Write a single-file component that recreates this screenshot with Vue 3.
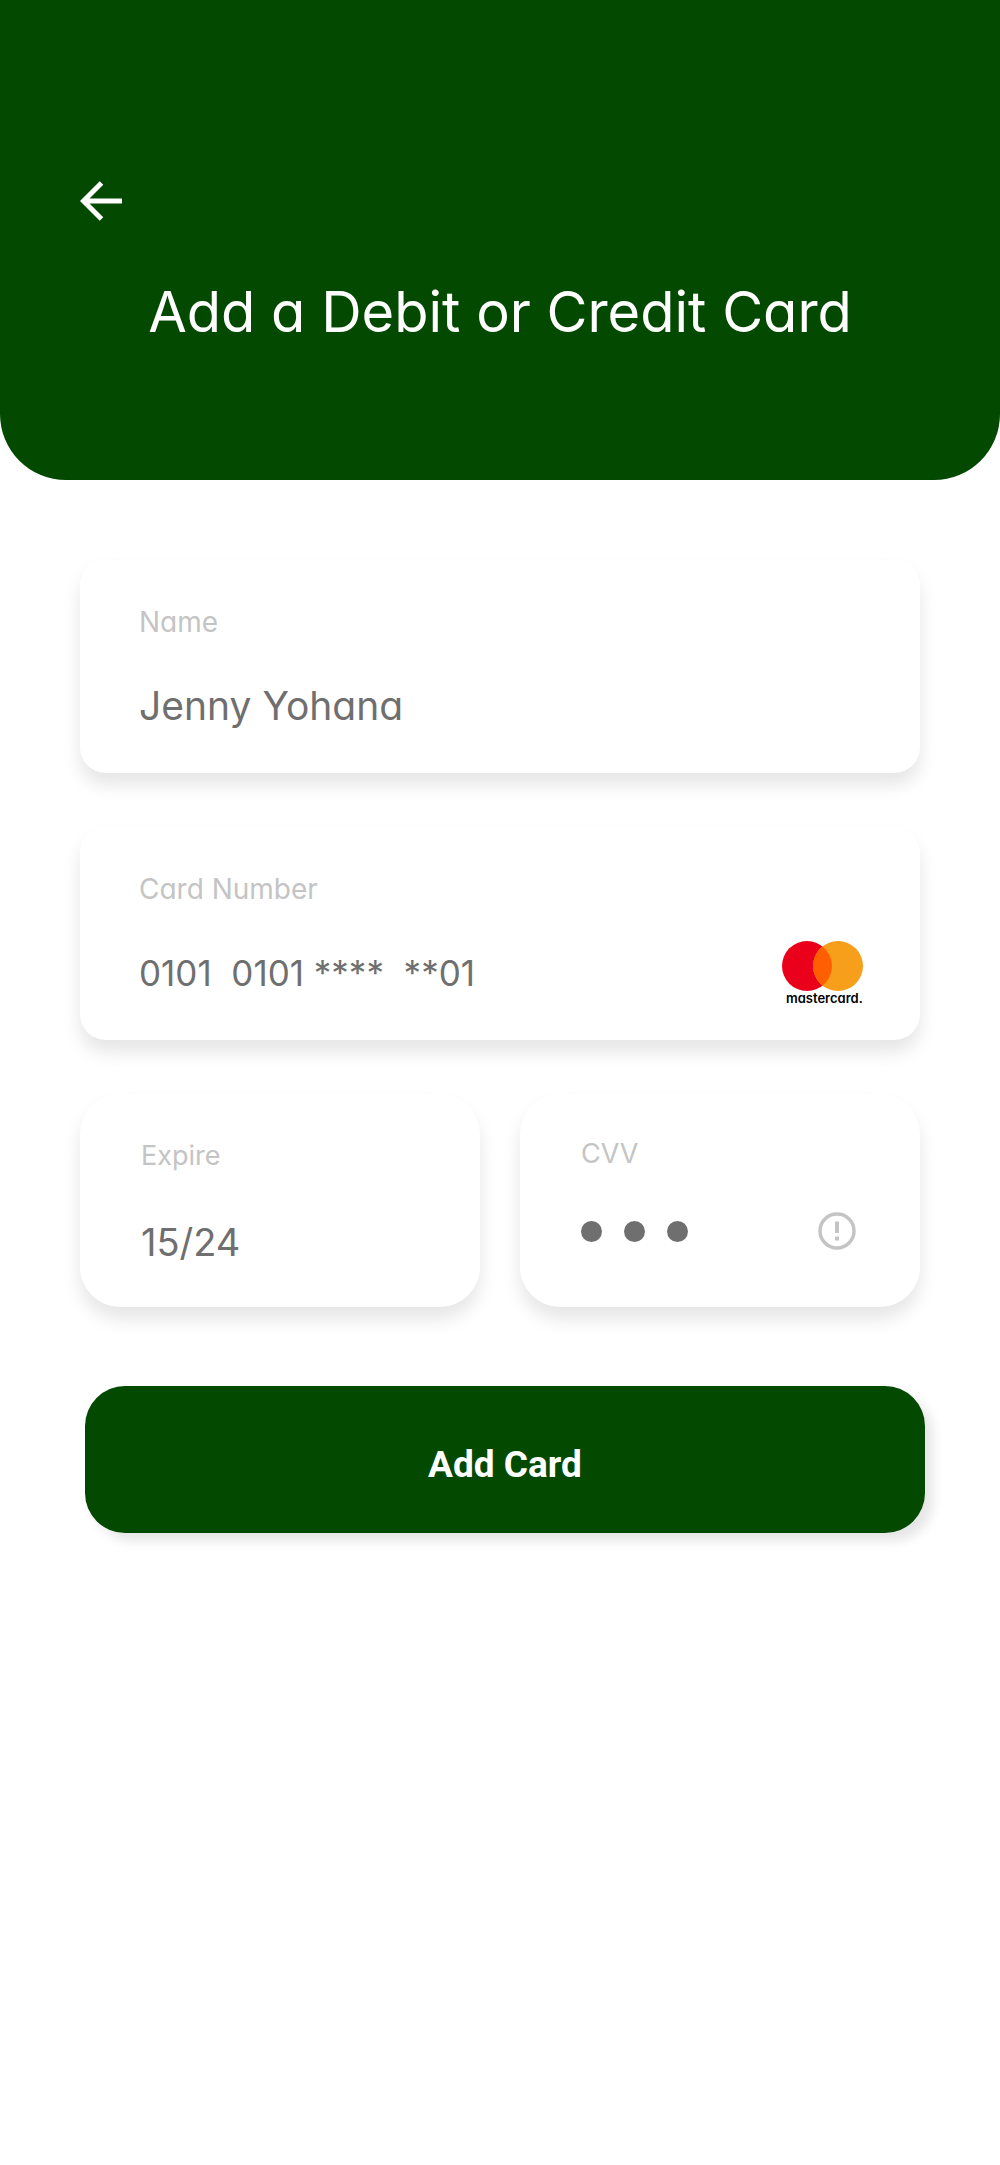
<script setup>
import { ref } from 'vue'

const name = ref('Jenny Yohana')
const number = ref('0101  0101 ****  **01')
const expire = ref('15/24')
const cvv = ref('123')
</script>

<template>
  <main class="page">
    <header class="header">
      <button class="back" type="button" aria-label="Back">
        <svg viewBox="0 0 42 42" width="42" height="42" aria-hidden="true">
          <path d="M42 21H5M21.500 3 3.500 21l18 18" fill="none" stroke="#fff" stroke-width="5" />
        </svg>
      </button>
      <h1 class="title">Add a Debit or Credit Card</h1>
    </header>

    <form class="form" @submit.prevent>
      <div class="card">
        <label class="label" for="name">Name</label>
        <input id="name" v-model="name" class="value" type="text" />
      </div>

      <div class="card">
        <label class="label" for="number">Card Number</label>
        <div class="line">
          <input id="number" v-model="number" class="value digits" type="text" />
          <svg class="brand" viewBox="0 0 82 64" width="82" height="64" role="img" aria-label="mastercard">
            <circle cx="25" cy="25" r="25" fill="#eb001b" />
            <circle cx="56" cy="25" r="25" fill="#f79e1b" />
            <path d="M40.500 5.400a25 25 0 0 1 0 39.200a25 25 0 0 1 0-39.200z" fill="#ff5f00" />
            <text x="4" y="62" class="brand-name">mastercard.</text>
          </svg>
        </div>
      </div>

      <div class="row">
        <div class="card small">
          <label class="label" for="expire">Expire</label>
          <input id="expire" v-model="expire" class="value" type="text" />
        </div>
        <div class="card small cvv">
          <label class="label" for="cvv">CVV</label>
          <div class="line">
            <div class="secret">
              <span v-for="n in cvv.length" :key="n" class="dot"></span>
              <input id="cvv" v-model="cvv" class="secret-input" type="password" maxlength="3" />
            </div>
            <button class="info" type="button" aria-label="About the CVV">
              <svg viewBox="0 0 38 38" width="38" height="38" aria-hidden="true">
                <circle cx="19" cy="19" r="17" fill="none" stroke="#c4c4c4" stroke-width="3.500" />
                <path d="M19 9.500v11.500M19 24.500v4" stroke="#c4c4c4" stroke-width="4" />
              </svg>
            </button>
          </div>
        </div>
      </div>

      <button class="submit" type="submit">Add Card</button>
    </form>
  </main>
</template>

<style>
body {
  margin: 0;
  background: #fff;
}
</style>

<style scoped>
.page {
  min-height: 100vh;
  background: #fff;
  font-family: Inter, 'Open Sans', sans-serif;
  font-feature-settings: 'cv11';
}

.page *,
.page {
  box-sizing: border-box;
}

button,
input {
  margin: 0;
  padding: 0;
  border: 0;
  background: none;
  font: inherit;
  font-feature-settings: inherit;
}

svg {
  display: block;
}

.header {
  display: flex;
  flex-direction: column;
  gap: 58px;
  padding: 180px 80px 136px;
  border-radius: 0 0 66px 66px;
  background: #034900;
}

.back {
  align-self: flex-start;
}

.title {
  margin: 0;
  color: #fff;
  font-size: 56px;
  font-weight: 400;
  line-height: 64px;
  text-align: center;
}

.form {
  display: flex;
  flex-direction: column;
  gap: 54px;
  padding: 80px;
}

.card {
  display: flex;
  flex-direction: column;
  gap: 44px;
  min-width: 0;
  padding: 46px 56px 43px 59px;
  border-radius: 26px;
  background: #fff;
  box-shadow: 0 12px 18px rgba(0, 0, 0, 0.1);
}

.row {
  display: grid;
  grid-template-columns: 1fr 1fr;
  gap: 40px;
}

.small {
  gap: 46px;
  padding: 46px 56px 41px 61px;
  border-radius: 40px;
}

.label {
  color: #c4c4c4;
  font-size: 28px;
  font-weight: 400;
  line-height: 32px;
}

.value {
  width: 100%;
  min-width: 0;
  height: 48px;
  color: #6f6f6f;
  font-size: 39px;
  font-weight: 400;
  line-height: 48px;
}

.digits {
  font-size: 35px;
}

.small .label {
  font-size: 27px;
}

.small .value {
  font-size: 38px;
}

.line {
  display: flex;
  align-items: center;
  justify-content: space-between;
  height: 48px;
}

.brand {
  flex: none;
}

.brand-name {
  font-size: 13px;
  font-weight: 600;
  fill: #000;
}

.cvv {
  gap: 37px;
  padding: 44px 64px 38px 61px;
}

.secret {
  position: relative;
  display: flex;
  gap: 22px;
}

.dot {
  width: 21px;
  height: 21px;
  border-radius: 50%;
  background: #6f6f6f;
}

.secret-input {
  position: absolute;
  inset: 0;
  width: 100%;
  opacity: 0;
}

.submit {
  height: 147px;
  margin: 25px -5px 0 5px;
  padding-top: 10px;
  border-radius: 40px;
  background: #034900;
  box-shadow: 8px 8px 12px rgba(0, 0, 0, 0.1);
  color: #fff;
  font-family: Roboto, sans-serif;
  font-size: 37px;
  font-weight: 700;
}
</style>
